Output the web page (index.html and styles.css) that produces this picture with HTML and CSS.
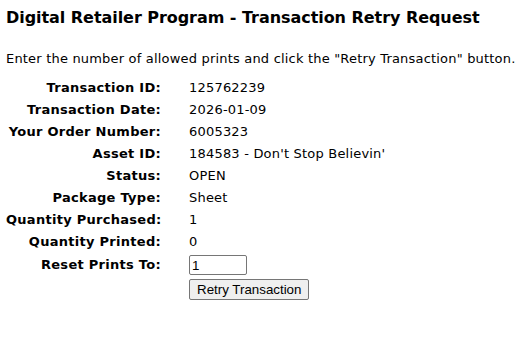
FILE: index.html
```html
<!DOCTYPE html>
<html>
<head>
<meta charset="utf-8">
<link rel="stylesheet" href="styles.css">
</head>
<body>
<h1 class="title">Digital Retailer Program - Transaction Retry Request</h1>
<p class="intro">Enter the number of allowed prints and click the "Retry Transaction" button.</p>
<div class="form">
  <div class="label">Transaction ID:</div><div class="value">125762239</div>
  <div class="label">Transaction Date:</div><div class="value">2026-01-09</div>
  <div class="label">Your Order Number:</div><div class="value">6005323</div>
  <div class="label">Asset ID:</div><div class="value">184583 - Don't Stop Believin'</div>
  <div class="label">Status:</div><div class="value">OPEN</div>
  <div class="label">Package Type:</div><div class="value">Sheet</div>
  <div class="label">Quantity Purchased:</div><div class="value">1</div>
  <div class="label">Quantity Printed:</div><div class="value">0</div>
  <div class="label">Reset Prints To:</div><div class="value field"><input class="prints" type="text" value="1"></div>
  <div class="label empty"></div><div class="value action"><button class="retry" type="button">Retry Transaction</button></div>
</div>
</body>
</html>
```
FILE: styles.css
```css
body {
  margin: 0;
  padding: 8px 6px;
  font-family: "DejaVu Sans", Verdana, sans-serif;
  font-size: 13px;
  color: #000;
  background: #fff;
}
.title {
  margin: 0;
  font-size: 16px;
  letter-spacing: -0.05px;
  font-weight: bold;
  line-height: 20px;
}
.intro {
  margin: 22px 0 0;
  line-height: 18px;
  letter-spacing: 0.19px;
}
.form {
  display: grid;
  grid-template-columns: 155px auto;
  column-gap: 28px;
  margin-top: 9px;
  align-items: center;
}
.label {
  text-align: right;
  font-weight: bold;
  line-height: 16px;
  padding: 3px 0;
  letter-spacing: 0.28px;
  white-space: nowrap;
}
.value {
  line-height: 16px;
  padding: 3px 0;
  letter-spacing: 0.2px;
  white-space: nowrap;
}
.value.field {
  padding: 2px 0;
  display: flex;
}
.value.action {
  padding: 2px 0 0;
  display: flex;
}
.label.empty {
  padding: 0;
}
.prints {
  width: 52px;
  height: 16px;
  padding: 1px 2px;
  border: 1px solid #767676;
  border-radius: 2px;
  font-family: Arial, "Liberation Sans", sans-serif;
  font-size: 13.33px;
  letter-spacing: 0;
  margin: 0;
}
.retry {
  font-family: Arial, "Liberation Sans", sans-serif;
  font-size: 13.33px;
  letter-spacing: 0;
  height: 21px;
  padding: 1px 7px;
  border: 1px solid #767676;
  border-radius: 2px;
  background: #efefef;
  margin: 0;
}
```
